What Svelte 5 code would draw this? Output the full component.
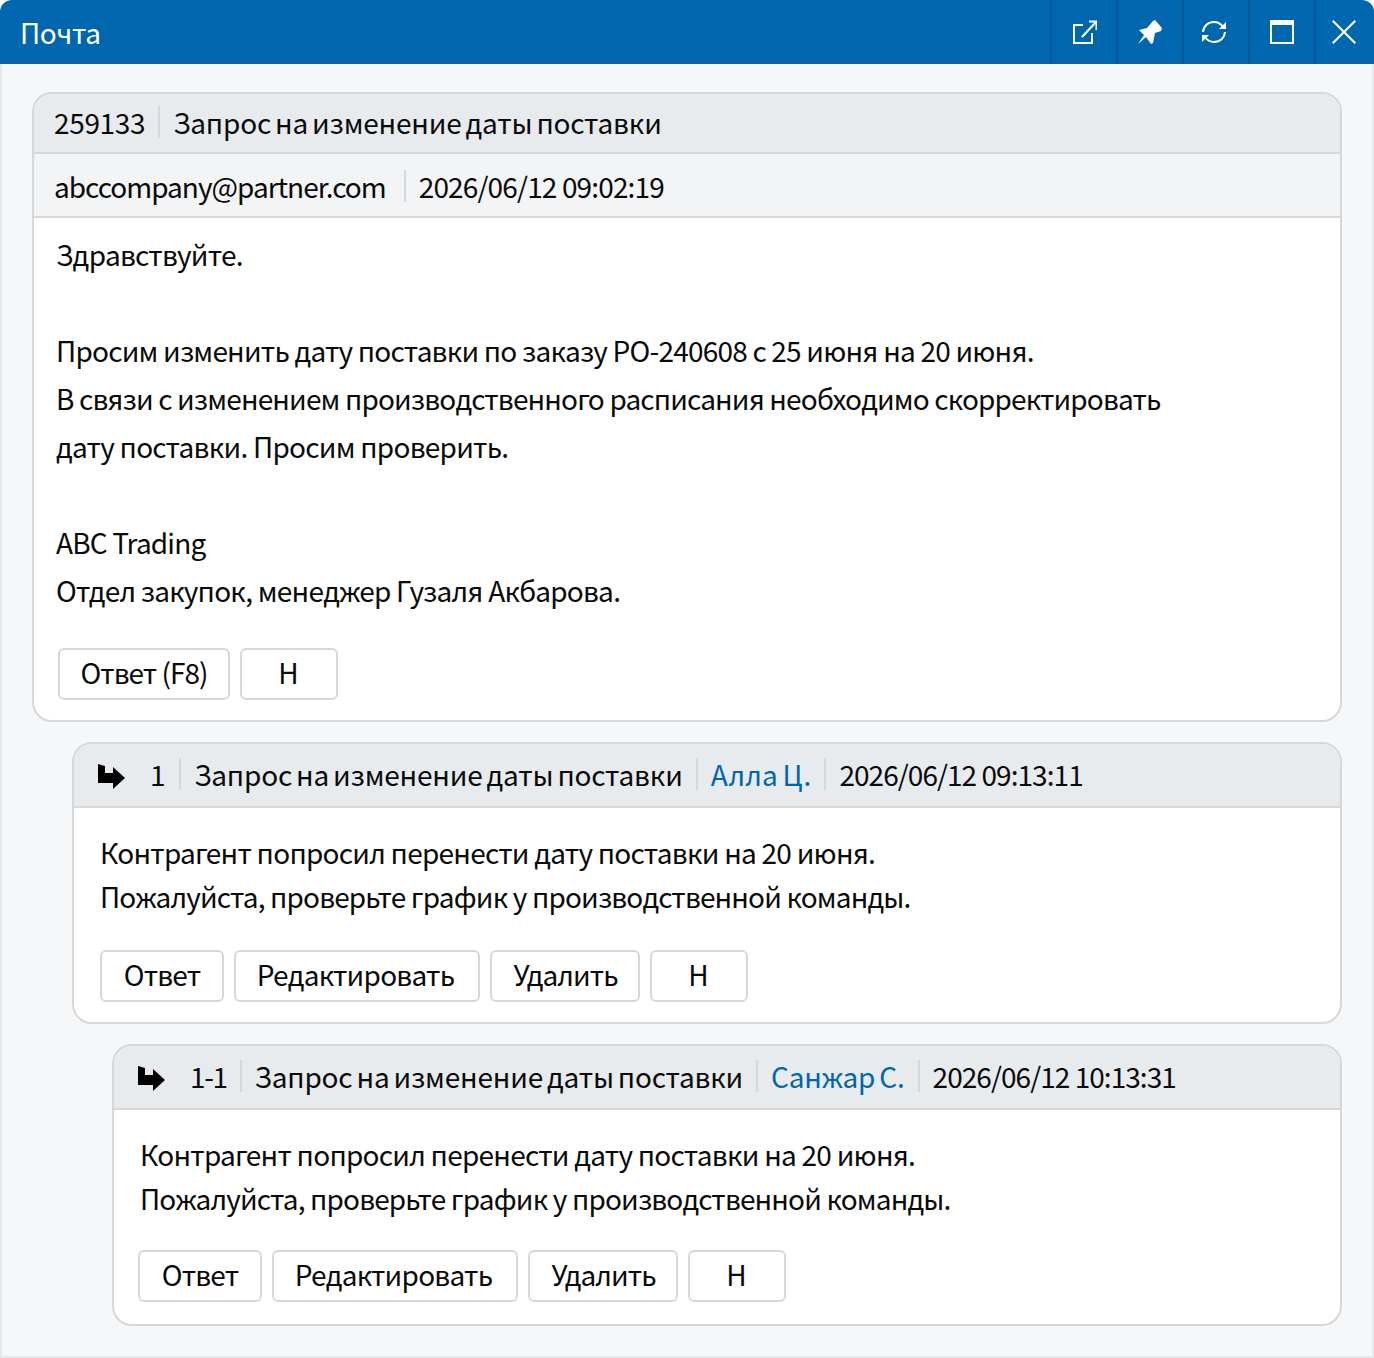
<script>
  const threads = [
    { cls: 'level1', num: '1', who: 'Алла Ц.', at: '2026/06/12 09:13:11' },
    { cls: 'level2', num: '1-1', who: 'Санжар С.', at: '2026/06/12 10:13:31' }
  ];
  const title = 'Запрос на изменение даты поставки';
</script>

<div class="window">
  <header class="titlebar">
    <h1>Почта</h1>
    <div class="tools">
      <button class="open" aria-label="open">
        <svg viewBox="0 0 24 24" width="24" height="24" fill="none" stroke="#fff" stroke-width="2">
          <path d="M10 5H1v18h18V13"/><path d="M9 17 23 2"/><path d="M16 1.500h7.500V10"/>
        </svg>
      </button>
      <button aria-label="pin">
        <svg viewBox="0 0 24 24" width="24" height="24" fill="#fff">
          <path d="M0 24 6 15 1 10 9 8 15 1 17 0 24 8 23 11 17 13 15 23 13 24 8 17Z"/>
        </svg>
      </button>
      <button class="refresh" aria-label="refresh">
        <svg viewBox="0 0 24 24" width="24" height="24" fill="none" stroke="#fff" stroke-width="2">
          <path d="M1 12C1.500 6 6 2 12 2c4 0 7 2 9 5"/><path d="M23 12c-.5 6-5 10-11 10-4 0-7-2-9-5"/>
          <path d="M24 2v7h-7z" fill="#fff" stroke="none"/><path d="M0 22v-7h7z" fill="#fff" stroke="none"/>
        </svg>
      </button>
      <button aria-label="maximize">
        <svg viewBox="0 0 24 24" width="24" height="24" fill="none" stroke="#fff" stroke-width="2">
          <path d="M1 1h22v22H1z"/><path d="M0 0h24v5H0z" fill="#fff" stroke="none"/>
        </svg>
      </button>
      <button class="close" aria-label="close">
        <svg viewBox="0 0 24 24" width="24" height="24" fill="none" stroke="#fff" stroke-width="2">
          <path d="M.7.7 23.300 23.300M23.300.7.7 23.300"/>
        </svg>
      </button>
    </div>
  </header>

  <main class="content">
    <section class="card">
      <div class="head">
        <span class="cell id">259133</span>
        <span class="cell strong">{title}</span>
      </div>
      <div class="meta">
        <span class="cell email">abccompany@partner.com</span>
        <span class="cell">2026/06/12 09:02:19</span>
      </div>
      <div class="body main-body">
        <p class="loose">Здравствуйте.</p>
        <p>&nbsp;</p>
        <p class="l1">Просим изменить дату поставки по заказу PO-240608 с 25 июня на 20 июня.</p>
        <p>В связи с изменением производственного расписания необходимо скорректировать</p>
        <p class="loose">дату поставки. Просим проверить.</p>
        <p>&nbsp;</p>
        <p>ABC Trading</p>
        <p class="loose">Отдел закупок, менеджер Гузаля Акбарова.</p>
      </div>
      <div class="actions main-actions">
        <button class="btn w172">Ответ (F8)</button>
        <button class="btn w98">Н</button>
      </div>
    </section>

    {#each threads as t}
      <section class="card {t.cls}">
        <div class="head thread">
          <svg class="arrow" viewBox="0 0 28 26" width="28" height="26" fill="#000">
            <path d="M0 0 7 2V9H15V3L27 14 15 25V19H0Z"/>
          </svg>
          <span class="cell num">{t.num}</span>
          <span class="cell strong">{title}</span>
          <span class="cell strong who">{t.who}</span>
          <span class="cell date">{t.at}</span>
        </div>
        <div class="body thread-body">
          <p class="loose">Контрагент попросил перенести дату поставки на 20 июня.</p>
          <p>Пожалуйста, проверьте график у производственной команды.</p>
        </div>
        <div class="actions">
          <button class="btn w124">Ответ</button>
          <button class="btn w246">Редактировать</button>
          <button class="btn w150">Удалить</button>
          <button class="btn w98">Н</button>
        </div>
      </section>
    {/each}
  </main>
</div>

<style>
  :global(body) {
    margin: 0;
    background: #fff;
  }
  .window {
    width: 1374px;
    height: 1358px;
    box-sizing: border-box;
    display: flex;
    flex-direction: column;
    background: #f6f7f9;
    border-radius: 12px 12px 0 0;
    overflow: hidden;
    font-family: "Noto Sans CJK KR", "Noto Sans", sans-serif;
    color: #0a0a0a;
    font-size: 28px;
    letter-spacing: -0.85px;
  }
  .titlebar {
    height: 64px;
    flex: none;
    background: #0066ad;
    display: flex;
    align-items: center;
    justify-content: space-between;
    padding-left: 20px;
  }
  h1 {
    margin: 0;
    font-size: 28px;
    font-weight: 400;
    color: #fff;
    letter-spacing: -0.4px;
  }
  .tools {
    display: flex;
    height: 100%;
  }
  .tools button {
    width: 66px;
    height: 64px;
    padding: 0;
    background: none;
    border: 0;
    border-left: 2px solid #005a9a;
    display: flex;
    align-items: center;
    justify-content: center;
  }
  .tools button.open {
    padding-left: 2px;
  }
  .tools button.refresh {
    padding-right: 4px;
  }
  .tools button.close {
    width: 60px;
    padding-right: 2px;
  }
  .content {
    flex: 1;
    border: solid #e6e7e9;
    border-width: 0 2px 2px;
    padding: 28px 30px 30px;
    display: flex;
    flex-direction: column;
    gap: 20px;
  }
  .card {
    background: #fff;
    border: 2px solid #d6d7d9;
    border-radius: 20px;
    overflow: hidden;
    box-sizing: border-box;
  }
  .level1 { margin-left: 40px; }
  .level2 { margin-left: 80px; }
  .head {
    height: 58px;
    box-sizing: content-box;
    background: #e8ebee;
    border-bottom: 2px solid #d6d7d9;
    display: flex;
    align-items: center;
    padding-left: 20px;
  }
  .head .cell {
    position: relative;
    top: -1px;
  }
  .thread {
    height: 62px;
    padding-left: 24px;
  }
  .meta {
    height: 62px;
    background: #f3f4f6;
    border-bottom: 2px solid #d6d7d9;
    display: flex;
    align-items: center;
    padding-left: 20px;
  }
  .meta .cell {
    position: relative;
    top: 1px;
  }
  .cell {
    line-height: 32px;
    white-space: nowrap;
  }
  .cell + .cell {
    border-left: 2px solid #d6d7d9;
    margin-left: 13px;
    padding-left: 13px;
  }
  .meta .cell + .cell {
    margin-left: 18px;
  }
  .id {
    letter-spacing: -0.35px;
  }
  .email {
    letter-spacing: -1px;
  }
  .strong {
    letter-spacing: -0.2px;
    word-spacing: -2px;
  }
  .date {
    letter-spacing: -0.95px;
  }
  .num {
    letter-spacing: -1.4px;
  }
  .level1 .num {
    letter-spacing: -0.4px;
    margin-right: 1px;
  }
  .level1 .who {
    letter-spacing: 0.2px;
  }
  .arrow {
    flex: none;
    margin: 3px 24px 0 0;
  }
  .who {
    color: #0066ad;
  }
  .body p {
    margin: 0;
    white-space: nowrap;
  }
  .body p.loose {
    letter-spacing: -0.75px;
  }
  .body p.l1 {
    letter-spacing: -0.79px;
  }
  .main-body {
    padding: 12px 22px 0;
    line-height: 48px;
  }
  .thread-body {
    padding: 22px 26px 0;
    line-height: 44px;
  }
  .actions {
    display: flex;
    gap: 10px;
    padding: 32px 26px 20px;
  }
  .level2 .actions {
    padding: 30px 24px 22px;
  }
  .main-actions {
    padding: 34px 24px 20px;
  }
  .btn {
    height: 52px;
    box-sizing: border-box;
    padding: 0 0 5px;
    background: #fff;
    border: 2px solid #d6d7d9;
    border-radius: 6px;
    font: inherit;
    letter-spacing: -0.8px;
    color: inherit;
  }
  .w98 { width: 98px; padding-right: 2px; }
  .w124 { width: 124px; }
  .w150 { width: 150px; padding-left: 1px; letter-spacing: -0.95px; }
  .w172 { width: 172px; letter-spacing: -1px; }
  .w246 { width: 246px; padding-right: 3px; letter-spacing: -0.75px; }
</style>
